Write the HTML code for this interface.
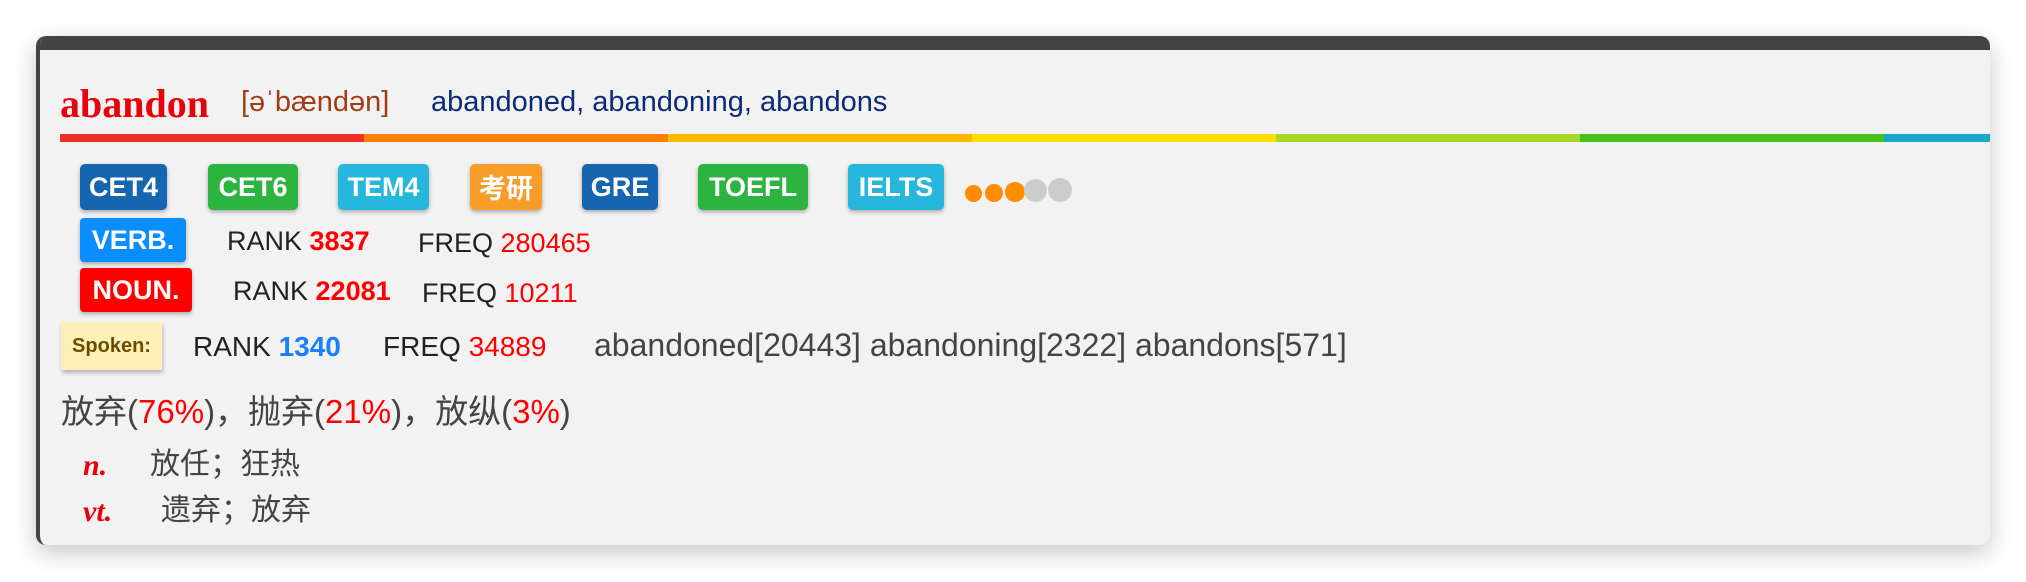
<!DOCTYPE html>
<html><head><meta charset="utf-8"><style>
body{margin:0;width:2026px;height:582px;background:#fff;font-family:"Liberation Sans","Noto Sans CJK SC",sans-serif;position:relative;overflow:hidden}
.card{position:absolute;left:36px;top:36px;width:1954px;height:509px;background:#f2f2f2;border-radius:10px;box-shadow:0 8px 24px rgba(0,0,0,.22);overflow:hidden;border-left:4px solid #444;box-sizing:border-box}
.top{position:absolute;left:0;top:0;right:0;height:14px;background:#444}
.a{position:absolute;white-space:nowrap;line-height:1}
.bar{position:absolute;top:98px;height:8px}
.b{position:absolute;top:128px;height:46px;border-radius:5px;color:#fff;font-weight:bold;font-size:27px;line-height:46px;text-align:center;box-shadow:0 2px 4px rgba(0,0,0,.3)}
.dot{position:absolute;border-radius:50%}
.r{color:#f00}
</style></head><body>
<div class="card">
<div class="top"></div>
<div class="a" style="left:20px;top:48px;font-family:'Liberation Serif',serif;font-weight:bold;font-size:40px;color:#e8000b">abandon</div>
<div class="a" style="left:201px;top:52px;font-size:29px;color:#a23c16">[əˈbændən]</div>
<div class="a" style="left:391px;top:52px;font-size:29px;color:#0b2c75">abandoned, abandoning, abandons</div>
<div class="bar" style="left:20px;width:304px;background:#ee3124"></div>
<div class="bar" style="left:324px;width:304px;background:#ff7f00"></div>
<div class="bar" style="left:628px;width:304px;background:#ffb900"></div>
<div class="bar" style="left:932px;width:304px;background:#ffe000"></div>
<div class="bar" style="left:1236px;width:304px;background:#a8d82a"></div>
<div class="bar" style="left:1540px;width:304px;background:#44c21a"></div>
<div class="bar" style="left:1844px;width:110px;background:#1aa9c9"></div>
<div class="b" style="left:40px;width:87px;background:#1565b0">CET4</div>
<div class="b" style="left:168px;width:90px;background:#2db33f">CET6</div>
<div class="b" style="left:298px;width:91px;background:#27b6dc">TEM4</div>
<div class="b" style="left:430px;width:72px;background:#f89c2a;font-family:'Noto Sans CJK SC',sans-serif">考研</div>
<div class="b" style="left:542px;width:76px;background:#1565b0">GRE</div>
<div class="b" style="left:658px;width:110px;background:#2db33f">TOEFL</div>
<div class="b" style="left:808px;width:96px;background:#27b6dc">IELTS</div>
<div class="dot" style="left:925px;top:149px;width:17px;height:17px;background:#ff8c00"></div>
<div class="dot" style="left:945px;top:148px;width:18px;height:18px;background:#ff8c00"></div>
<div class="dot" style="left:965px;top:146px;width:20px;height:20px;background:#ff8c00"></div>
<div class="dot" style="left:984px;top:143px;width:23px;height:23px;background:#ccc"></div>
<div class="dot" style="left:1008px;top:142px;width:24px;height:24px;background:#ccc"></div>
<div class="b" style="left:40px;top:182px;width:106px;height:44px;line-height:44px;background:#0a8eff;border-radius:4px">VERB.</div>
<div class="a" style="left:187px;top:192px;font-size:27px;color:#222">RANK <b class="r">3837</b></div>
<div class="a" style="left:378px;top:194px;font-size:27px;color:#222">FREQ <span class="r">280465</span></div>
<div class="b" style="left:40px;top:232px;width:112px;height:44px;line-height:44px;background:#f00;border-radius:4px">NOUN.</div>
<div class="a" style="left:193px;top:242px;font-size:27px;color:#222">RANK <b class="r">22081</b></div>
<div class="a" style="left:382px;top:244px;font-size:27px;color:#222">FREQ <span class="r">10211</span></div>
<div class="a" style="left:21px;top:286px;width:101px;height:48px;line-height:48px;background:#fdefb8;color:#6a4d00;font-weight:bold;font-size:20px;text-align:center;box-shadow:1px 3px 4px rgba(0,0,0,.25)">Spoken:</div>
<div class="a" style="left:153px;top:297px;font-size:28px;color:#222">RANK <b style="color:#1a7fff">1340</b></div>
<div class="a" style="left:343px;top:297px;font-size:28px;color:#222">FREQ <span class="r">34889</span></div>
<div class="a" style="left:554px;top:293px;font-size:32px;color:#444">abandoned[20443] abandoning[2322] abandons[571]</div>
<div class="a" style="left:21px;top:359px;font-size:33px;color:#444">放弃(<span class="r">76%</span>)，抛弃(<span class="r">21%</span>)，放纵(<span class="r">3%</span>)</div>
<div class="a" style="left:43px;top:415px;font-family:'Liberation Serif',serif;font-weight:bold;font-style:italic;font-size:30px;color:#e8000b">n.</div>
<div class="a" style="left:110px;top:414px;font-size:30px;color:#444">放任；狂热</div>
<div class="a" style="left:43px;top:461px;font-family:'Liberation Serif',serif;font-weight:bold;font-style:italic;font-size:30px;color:#e8000b">vt.</div>
<div class="a" style="left:121px;top:460px;font-size:30px;color:#444">遗弃；放弃</div>
</div>
</body></html>
